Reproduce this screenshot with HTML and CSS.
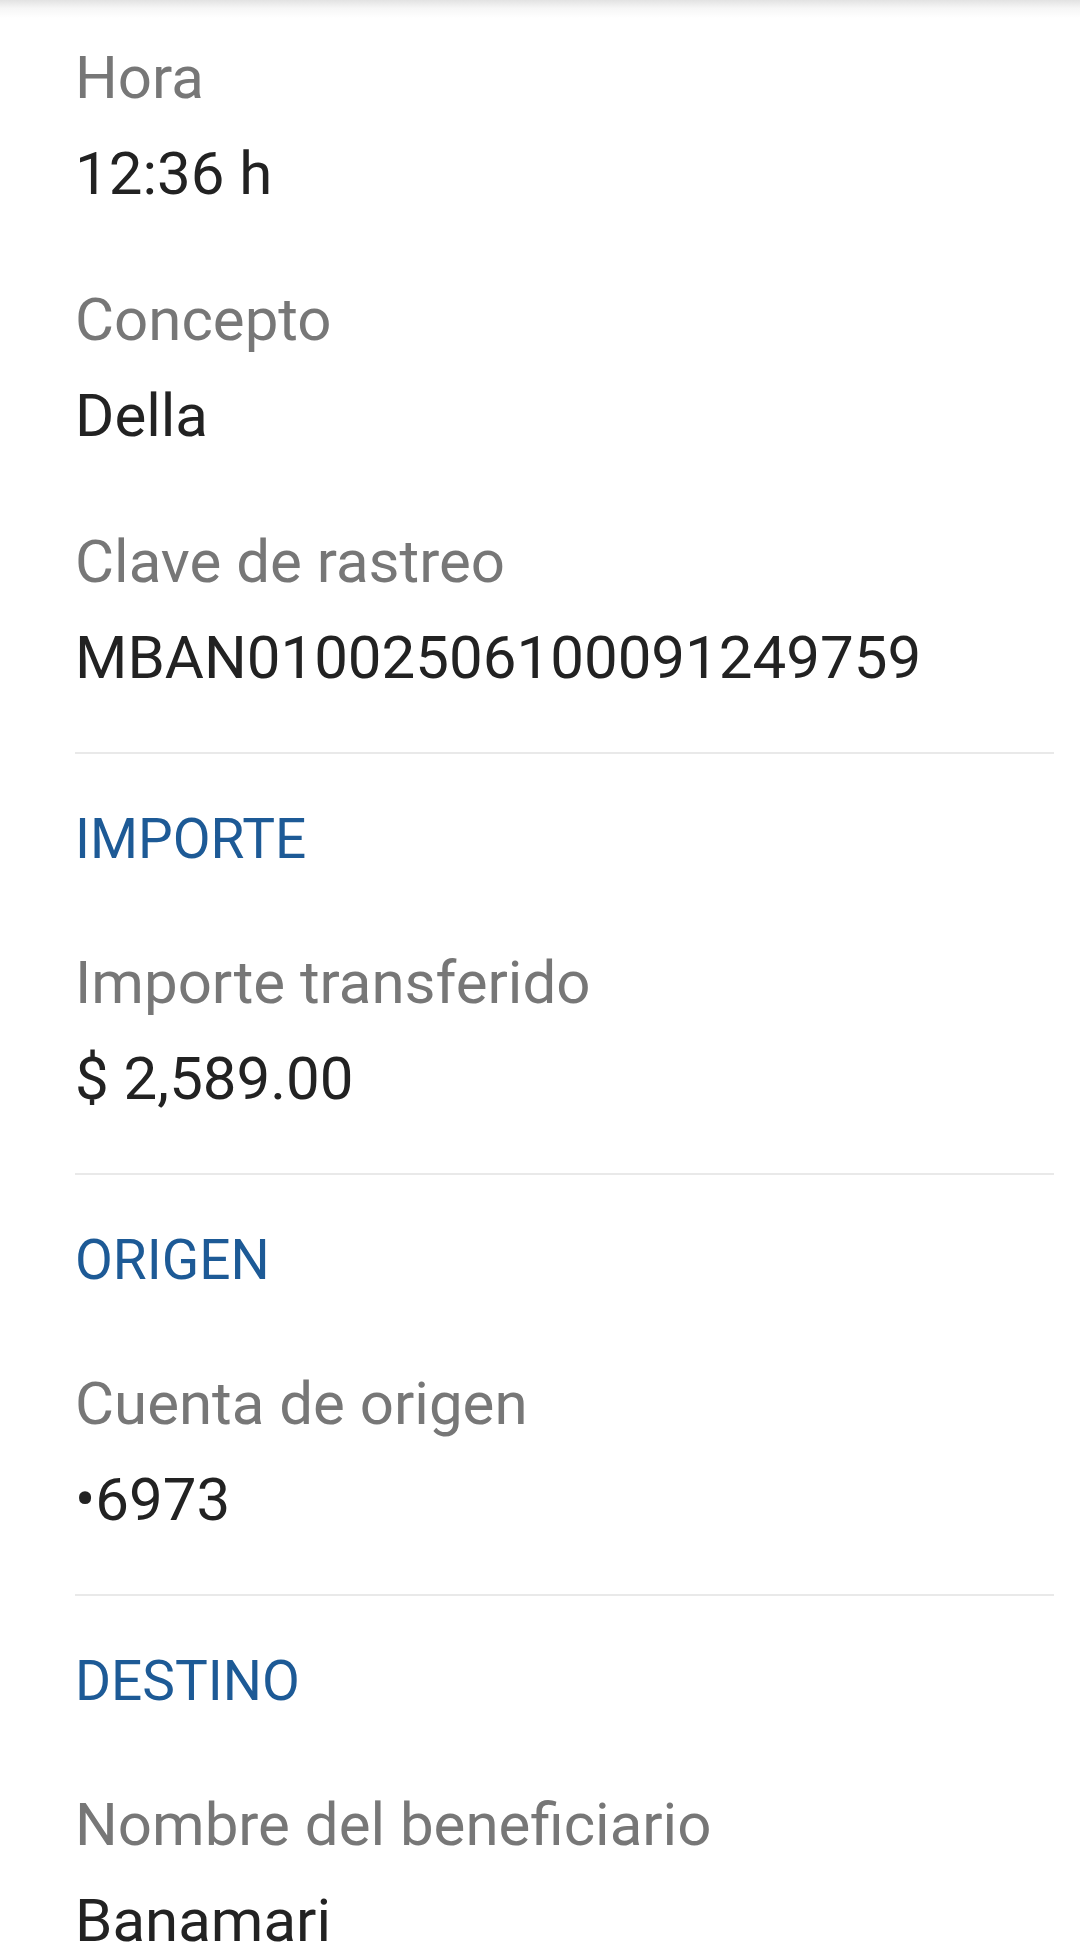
FILE: index.html
```html
<!DOCTYPE html>
<html lang="es">

<head>
    <meta charset="UTF-8" />
    <meta name="viewport" content="width=device-width, initial-scale=1.0" />
    <title>Detalle de transferencia</title>
    <link rel="stylesheet" href="styles.css">
</head>

<body>
    <div class="top_shadow"></div>

    <div id="detail">
        <div class="section first">
            <div class="item">
                <div class="label">Hora</div>
                <div class="value">12:36 h</div>
            </div>
            <div class="item">
                <div class="label">Concepto</div>
                <div class="value">Della</div>
            </div>
            <div class="item">
                <div class="label">Clave de rastreo</div>
                <div class="value">MBAN01002506100091249759</div>
            </div>
        </div>

        <div class="section">
            <h2>IMPORTE</h2>
            <div class="item">
                <div class="label">Importe transferido</div>
                <div class="value">$ 2,589.00</div>
            </div>
        </div>

        <div class="section">
            <h2>ORIGEN</h2>
            <div class="item">
                <div class="label">Cuenta de origen</div>
                <div class="value">•6973</div>
            </div>
        </div>

        <div class="section last">
            <h2>DESTINO</h2>
            <div class="item">
                <div class="label">Nombre del beneficiario</div>
                <div class="value">Banamari</div>
            </div>
        </div>
    </div>
</body>

</html>
```

FILE: styles.css
```css
body {
    margin: 0;
    padding: 0;
    background-color: #ffffff;
    font-family: Roboto, "Noto Sans", Arial, sans-serif;
    overflow: hidden;
}

.top_shadow {
    height: 18px;
    background: linear-gradient(to bottom, #e2e2e2, #f6f6f6 45%, #ffffff);
}

#detail {
    padding: 12px 26px 0 75px;
}

.section {
    border-bottom: 2px solid #e9e9e9;
    padding-bottom: 46px;
    margin-bottom: 37px;
}

.section.last {
    border-bottom: none;
}

.item + .item {
    margin-top: 50px;
}

.label,
.value {
    font-size: 60px;
    line-height: 96px;
}

.label {
    color: #777777;
}

.value {
    color: #222222;
}

h2 {
    margin: 0 0 48px 0;
    font-size: 55px;
    line-height: 96px;
    font-weight: 400;
    color: #1d5a96;
}
```
